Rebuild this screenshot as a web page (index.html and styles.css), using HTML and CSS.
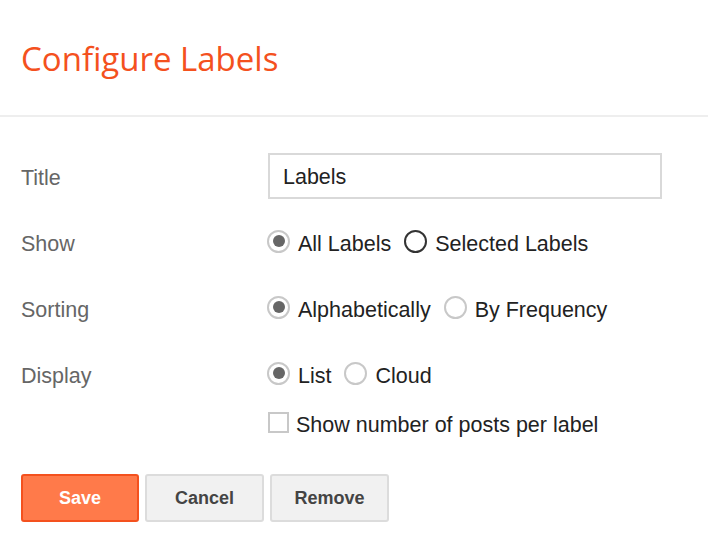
FILE: index.html
```html
<!DOCTYPE html>
<html>
<head>
<meta charset="utf-8">
<link rel="stylesheet" href="styles.css">
</head>
<body>
<div class="header"><h1 class="title">Configure Labels</h1></div>
<div class="form">
  <div class="row">
    <div class="label">Title</div>
    <div class="control"><div class="input">Labels</div></div>
  </div>
  <div class="row">
    <div class="label">Show</div>
    <div class="control">
      <span class="radio on"></span><span class="opt">All Labels</span>
      <span class="radio dark"></span><span class="opt">Selected Labels</span>
    </div>
  </div>
  <div class="row">
    <div class="label">Sorting</div>
    <div class="control">
      <span class="radio on"></span><span class="opt">Alphabetically</span>
      <span class="radio"></span><span class="opt">By Frequency</span>
    </div>
  </div>
  <div class="row">
    <div class="label">Display</div>
    <div class="control">
      <span class="radio on"></span><span class="opt">List</span>
      <span class="radio"></span><span class="opt">Cloud</span>
    </div>
  </div>
  <div class="row short">
    <div class="label"></div>
    <div class="control">
      <span class="check"></span><span class="opt">Show number of posts per label</span>
    </div>
  </div>
</div>
<div class="buttons">
  <button class="btn primary">Save</button>
  <button class="btn">Cancel</button>
  <button class="btn">Remove</button>
</div>
</body>
</html>
```
FILE: styles.css
```css
html, body { margin: 0; padding: 0; background: #fff; }
body { font-family: "Liberation Sans", Arial, sans-serif; width: 708px; height: 554px; overflow: hidden; }
.header { height: 117px; border-bottom: 2px solid #eeeeee; padding-left: 21px; display: flex; align-items: center; box-sizing: border-box; }
.title { margin: 0; font-family: "Open Sans", sans-serif; font-weight: 400; font-size: 33px; color: #f4511e; letter-spacing: 0; padding-top: 1px; }
.form { padding: 26px 0 0 21px; }
.row { display: flex; align-items: center; height: 66px; }
.row.short { height: 32px; }
.label { width: 247px; font-size: 21.5px; color: #666; padding-top: 4px; }
.control { display: flex; align-items: center; font-size: 21.5px; color: #222; }
.input { width: 394px; height: 46px; box-sizing: border-box; border: 2px solid #d9d9d9; padding: 2px 0 0 13px; display: flex; align-items: center; }
.radio { width: 23px; height: 23px; box-sizing: border-box; border: 2px solid #c8c8c8; border-radius: 50%; display: flex; align-items: center; justify-content: center; margin-left: -1px; margin-top: -2px; }
.radio.dark { border-color: #333; }
.radio.on::after { content: ""; width: 12px; height: 12px; border-radius: 50%; background: #666; }
.opt { margin-left: 8px; margin-right: 14px; padding-top: 4px; }
.check { width: 21px; height: 21px; box-sizing: border-box; border: 2px solid #c8c8c8; margin-top: -1px; }
.check + .opt { margin-left: 7px; }
.buttons { display: flex; gap: 6px; padding: 35px 0 0 21px; }
.btn { width: 119px; height: 48px; box-sizing: border-box; border: 2px solid #dcdcdc; border-radius: 3px; background: #f1f1f1; color: #444; font-family: "Liberation Sans", Arial, sans-serif; font-weight: 700; font-size: 18px; padding: 0; }
.btn.primary { width: 118px; background: #ff7a4a; border-color: #f4511e; color: #fff; }
```
